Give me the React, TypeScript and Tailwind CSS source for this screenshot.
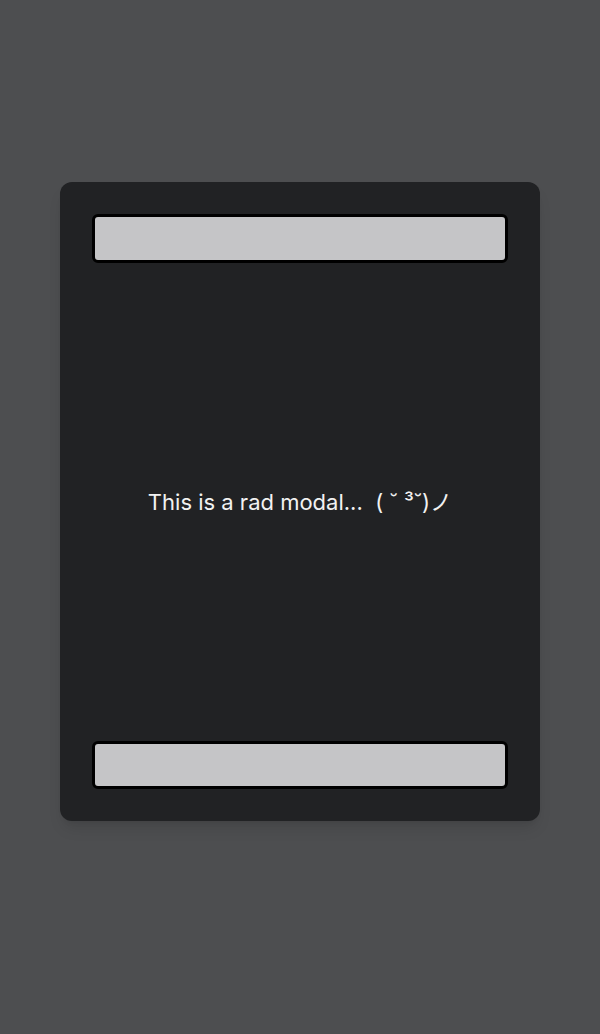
export default function App() {
  return (
    <div className="w-[600px] h-[1034px] bg-[#4d4e50] pt-[182px]" style={{ fontFamily: "Inter, 'Noto Sans CJK JP', sans-serif" }}>
      <div className="mx-auto w-[480px] h-[639px] rounded-xl bg-[#212224] p-8 flex flex-col justify-between shadow-lg">
        <input className="h-[49px] w-full rounded-md border-[3px] border-black bg-[#c5c5c7] outline-none" />
        <p className="text-center text-[22px] text-[#f2f2f2]">This is a rad modal...&nbsp; ( ˘ ³˘)ノ</p>
        <input className="h-[48px] w-full rounded-md border-[3px] border-black bg-[#c5c5c7] outline-none" />
      </div>
    </div>
  );
}
